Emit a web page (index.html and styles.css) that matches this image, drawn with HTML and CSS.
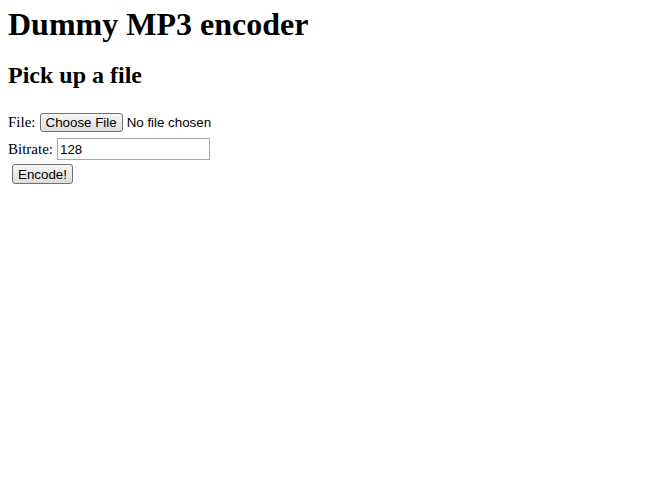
FILE: index.html
```html
<!DOCTYPE html>
<html>
<head>
<meta charset="utf-8">
<title>Dummy MP3 encoder</title>
<link rel="stylesheet" href="styles.css">
</head>
<body class="page">
<h1 class="title">Dummy MP3 encoder</h1>
<h2 class="subtitle">Pick up a file</h2>
<form class="form">
  <div class="row row-file"><span class="label">File:</span><input class="file" type="file"></div>
  <div class="row row-rate"><span class="label">Bitrate:</span><input class="text" type="text" value="128"></div>
  <div class="row row-go"><button class="btn" type="button">Encode!</button></div>
</form>
</body>
</html>
```
FILE: styles.css
```css
html { background: #fff; }
.page {
  margin: 8px;
  font-family: "Liberation Serif", "Times New Roman", serif;
  font-size: 16px;
  color: #000;
}
.title {
  font-size: 32px;
  font-weight: bold;
  margin: 0 0 21px;
  line-height: 32px;
}
.subtitle {
  font-size: 24px;
  font-weight: bold;
  margin: 0 0 24px;
  line-height: 28px;
}
.form {
  display: flex;
  flex-direction: column;
}
.row {
  display: flex;
  align-items: center;
  gap: 4px;
  font-size: 15px;
}
.row-file { height: 19px; }
.row-rate { height: 22px; margin-top: 6px; }
.row-go { height: 20px; margin-top: 4px; padding-left: 4px; }
.file, .text, .btn {
  font-family: "Liberation Sans", Arial, sans-serif;
  font-size: 13.33px;
  color: #000;
}
.file { margin: 0; padding: 0; }
.text {
  box-sizing: border-box;
  width: 153px;
  height: 22px;
  padding: 1px 2px;
  border: 1px solid #a9a9a9;
  margin: 0;
  outline: none;
}
.btn {
  box-sizing: border-box;
  height: 20px;
  margin: 0;
  padding: 0 5px;
  background: linear-gradient(#f6f6f6, #dddddd);
  border: 1px solid #707070;
  border-radius: 3px;
  color: #000;
}
.file::file-selector-button {
  box-sizing: border-box;
  height: 19px;
  font-family: "Liberation Sans", Arial, sans-serif;
  font-size: 13.33px;
  padding: 0 5px;
  background: linear-gradient(#f6f6f6, #dddddd);
  border: 1px solid #707070;
  border-radius: 3px;
  margin-right: 4px;
  color: #000;
}
```
